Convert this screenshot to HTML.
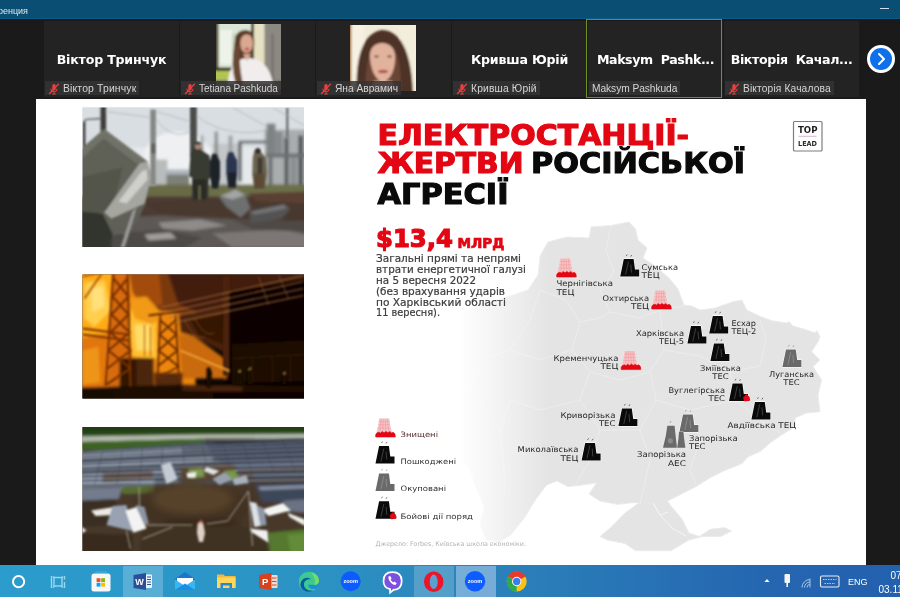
<!DOCTYPE html>
<html lang="uk"><head><meta charset="utf-8"><title>Zoom Конференция</title>
<style>
html,body{margin:0;padding:0}
body{width:900px;height:600px;overflow:hidden;background:#1a1a1a;position:relative;font-family:"Liberation Sans",sans-serif}
.abs{position:absolute}
#titlebar{left:0;top:0;width:900px;height:19px;background:#0a4e73;border-bottom:1.5px solid #0b5a86;box-sizing:border-box;box-shadow:-6px 0 0 #0a4e73,6px 0 0 #0a4e73,0 -6px 0 #0a4e73,-6px -6px 0 #0a4e73,6px -6px 0 #0a4e73}
#titlebar span{position:absolute;right:872px;top:5.5px;font-size:9px;color:#dfe9ef;white-space:nowrap}
#min{left:880px;top:8px;width:9px;height:1px;background:#cfe0ea}
.tile{position:absolute;top:21px;width:135px;height:76px;background:#232323;overflow:hidden}
.tile .nm{position:absolute;left:0;width:135px;top:29.7px;text-align:center;color:#fff;font-weight:bold;font-family:"DejaVu Sans","Liberation Sans",sans-serif;font-size:12.6px;letter-spacing:-0.2px;white-space:nowrap;line-height:18px}
.tile .lb{position:absolute;left:1px;top:59.5px;height:14.5px;background:rgba(52,52,52,.85);color:#d6d6d6;font-size:10.4px;letter-spacing:.15px;line-height:15px;white-space:nowrap;padding:0 3px 0 18px}
.tile .lb.nomic{padding-left:3px}
.tile .lb svg{position:absolute;left:3px;top:2px}
#active{left:586px;top:19px;width:134px;height:77px;border:1.5px solid #6f8f22;box-sizing:content-box}
#next{left:867px;top:45px;width:22px;height:22px;border-radius:50%;background:#0e71eb;border:3px solid #fff}
#slide{left:35.5px;top:98.5px;width:830.5px;height:466.5px;background:#fff;overflow:hidden}
#taskbar{left:0;top:565px;width:900px;height:32px;background:linear-gradient(90deg,#2b9ccc 0%,#2b93c4 35%,#2a7db8 60%,#2566b1 85%,#2360ae 100%);box-shadow:-6px 0 0 #2b9ccc,6px 0 0 #2360ae}
#under{left:0;top:597px;width:900px;height:3px;background:#fff;box-shadow:-6px 0 0 #fff,6px 0 0 #fff,0 6px 0 #fff,-6px 6px 0 #fff,6px 6px 0 #fff}
#root{position:absolute;left:-6px;top:-6px;width:912px;height:612px;overflow:hidden;background:#1a1a1a;filter:blur(0.5px)}
#stage{position:absolute;left:6px;top:6px;width:900px;height:600px}
html{background:#1a1a1a}
</style></head><body><div id="root"><div id="stage">
<div id="titlebar" class="abs"><span>Конференция</span></div><div id="min" class="abs"></div>

<div class="tile" style="left:44px"><div class="nm">Віктор Тринчук</div><div class="lb" style="font-size:10.4px"><svg width="12" height="12" viewBox="0 0 12 12"><path d="M6,1 a1.7,1.7 0 0 1 1.7,1.7 v3 a1.7,1.7 0 0 1 -3.4,0 v-3 A1.7,1.7 0 0 1 6,1 Z" fill="#e8403f"/><path d="M2.8,5.6 a3.2,3.2 0 0 0 6.4,0 M6,8.8 v2 M4.2,11 h3.6" stroke="#e8403f" stroke-width="1" fill="none"/><path d="M1.2,11 L10.8,0.8" stroke="#e8403f" stroke-width="1.3"/></svg>Віктор Тринчук</div></div>
<div class="tile" style="left:180px"><svg class="abs" style="left:35.6px;top:3px" width="65" height="66" viewBox="0 0 65 66"><defs><filter id="b1" x="-10%" y="-10%" width="120%" height="120%"><feGaussianBlur stdDeviation="0.9"/></filter><clipPath id="k1"><rect width="65" height="66"/></clipPath></defs>
<g clip-path="url(#k1)"><rect width="65" height="66" fill="#c9ccbc"/><g filter="url(#b1)">
<rect x="-2" y="-2" width="40" height="52" fill="#dce6d6"/>
<rect x="4" y="6" width="12" height="34" fill="#eef3ea"/>
<rect x="16" y="10" width="10" height="30" fill="#c4d4bc"/>
<rect x="-2" y="-2" width="4.4" height="70" fill="#4f4636"/>
<rect x="35" y="-2" width="3.2" height="38" fill="#3d392b"/>
<rect x="38" y="-2" width="10.5" height="52" fill="#e5e1c2"/>
<rect x="48.5" y="-2" width="20" height="70" fill="#8c8882"/>
<rect x="55" y="10" width="3" height="50" fill="#7a7670"/>
<rect x="-2" y="43.5" width="18" height="3.4" fill="#3b3729"/>
<rect x="-2" y="47" width="16" height="12" fill="#b4c452"/>
<rect x="-2" y="56" width="70" height="12" fill="#77736b"/>
<path d="M19,16 C19,4 37,2 38,14 C39,22 37,30 35,36 L30,46 L30,58 L17,58 C16,44 17,30 19,16 Z" fill="#5b3b29"/>
<ellipse cx="30.6" cy="19.5" rx="6.4" ry="9.4" fill="#d9a88f"/>
<path d="M24,14 C26,6 36,6 37,14 C34,9 28,9 24,14 Z" fill="#5b3b29"/>
<path d="M12,60 C12,44 20,35 30,34 C44,33 54,42 57,60 Z" fill="#f1eded"/>
<path d="M19,22 C16,34 16,48 20,60 L27,60 C24,46 23,34 24.5,22 Z" fill="#6a4632"/>
<ellipse cx="31" cy="25" rx="2.4" ry="1.2" fill="#c2364f"/>
<path d="M27,30 L31,37 L35,30 Z" fill="#d9a88f"/>
</g></g></svg><div class="lb" style="font-size:10px;letter-spacing:-0.05px"><svg width="12" height="12" viewBox="0 0 12 12"><path d="M6,1 a1.7,1.7 0 0 1 1.7,1.7 v3 a1.7,1.7 0 0 1 -3.4,0 v-3 A1.7,1.7 0 0 1 6,1 Z" fill="#e8403f"/><path d="M2.8,5.6 a3.2,3.2 0 0 0 6.4,0 M6,8.8 v2 M4.2,11 h3.6" stroke="#e8403f" stroke-width="1" fill="none"/><path d="M1.2,11 L10.8,0.8" stroke="#e8403f" stroke-width="1.3"/></svg>Tetiana Pashkuda</div></div>
<div class="tile" style="left:316px"><svg class="abs" style="left:34px;top:4px" width="66" height="66" viewBox="0 0 66 66"><defs><filter id="b2" x="-10%" y="-10%" width="120%" height="120%"><feGaussianBlur stdDeviation="0.9"/></filter><clipPath id="k2"><rect width="66" height="66"/></clipPath></defs>
<g clip-path="url(#k2)"><rect width="66" height="66" fill="#f1ebd9"/><g filter="url(#b2)">
<rect x="-2" y="-2" width="3.4" height="70" fill="#a9733f"/>
<rect x="2" y="-2" width="12" height="70" fill="#f6f1e2"/>
<rect x="50" y="-2" width="18" height="70" fill="#f3eddb"/>
<path d="M7,70 C5,40 10,8 32,5 C54,6 62,34 63,70 Z" fill="#4e3226"/>
<path d="M16,70 C14,50 18,30 22,22 L44,22 C50,34 52,52 50,70 Z" fill="#6b4434"/>
<path d="M20,30 C20,14 44,14 45,30 C46,44 40,56 33,57 C26,56 20,44 20,30 Z" fill="#e2b39c"/>
<path d="M19,30 C20,12 31,9 33,9 C37,9 46,12 46,30 C43,20 38,15 32,14 C26,15 22,20 19,30 Z" fill="#4e3226"/>
<ellipse cx="33" cy="46.5" rx="5" ry="1.7" fill="#b44a4a"/>
<ellipse cx="26.5" cy="31.5" rx="2.4" ry="1" fill="#5b4037"/><ellipse cx="39.5" cy="31.5" rx="2.4" ry="1" fill="#5b4037"/>
<path d="M24,56 L42,56 L46,70 L20,70 Z" fill="#dba992"/>
</g></g></svg><div class="lb" style="font-size:10.2px;letter-spacing:0"><svg width="12" height="12" viewBox="0 0 12 12"><path d="M6,1 a1.7,1.7 0 0 1 1.7,1.7 v3 a1.7,1.7 0 0 1 -3.4,0 v-3 A1.7,1.7 0 0 1 6,1 Z" fill="#e8403f"/><path d="M2.8,5.6 a3.2,3.2 0 0 0 6.4,0 M6,8.8 v2 M4.2,11 h3.6" stroke="#e8403f" stroke-width="1" fill="none"/><path d="M1.2,11 L10.8,0.8" stroke="#e8403f" stroke-width="1.3"/></svg>Яна Аврамич</div></div>
<div class="tile" style="left:452px"><div class="nm">Кривша Юрій</div><div class="lb" style="font-size:10.3px"><svg width="12" height="12" viewBox="0 0 12 12"><path d="M6,1 a1.7,1.7 0 0 1 1.7,1.7 v3 a1.7,1.7 0 0 1 -3.4,0 v-3 A1.7,1.7 0 0 1 6,1 Z" fill="#e8403f"/><path d="M2.8,5.6 a3.2,3.2 0 0 0 6.4,0 M6,8.8 v2 M4.2,11 h3.6" stroke="#e8403f" stroke-width="1" fill="none"/><path d="M1.2,11 L10.8,0.8" stroke="#e8403f" stroke-width="1.3"/></svg>Кривша Юрій</div></div>
<div class="tile" style="left:588px"><div class="nm"><span style="letter-spacing:-0.4px">Maksym&nbsp; Pashk...</span></div><div class="lb nomic" style="font-size:10.2px;letter-spacing:-0.05px">Maksym Pashkuda</div></div>
<div class="tile" style="left:724px"><div class="nm"><span style="letter-spacing:-0.36px">Вікторія&nbsp; Качал...</span></div><div class="lb" style="font-size:10.2px"><svg width="12" height="12" viewBox="0 0 12 12"><path d="M6,1 a1.7,1.7 0 0 1 1.7,1.7 v3 a1.7,1.7 0 0 1 -3.4,0 v-3 A1.7,1.7 0 0 1 6,1 Z" fill="#e8403f"/><path d="M2.8,5.6 a3.2,3.2 0 0 0 6.4,0 M6,8.8 v2 M4.2,11 h3.6" stroke="#e8403f" stroke-width="1" fill="none"/><path d="M1.2,11 L10.8,0.8" stroke="#e8403f" stroke-width="1.3"/></svg>Вікторія Качалова</div></div>
<div id="active" class="abs"></div>
<div id="next" class="abs"><svg width="22" height="22" viewBox="0 0 22 22"><path d="M9,6 L14,11 L9,16" stroke="#fff" stroke-width="2" fill="none" stroke-linecap="round" stroke-linejoin="round"/></svg></div>
<div id="slide" class="abs"><svg class="abs" style="left:-0.5px;top:1.5px" width="831" height="465" viewBox="35 100 831 465">
<defs>
<linearGradient id="fade" x1="458" x2="548" y1="0" y2="0" gradientUnits="userSpaceOnUse"><stop offset="0" stop-color="#fff" stop-opacity="0"/><stop offset="1" stop-color="#fff" stop-opacity="1"/></linearGradient>
<mask id="mfade" maskUnits="userSpaceOnUse" x="400" y="200" width="470" height="370"><rect x="400" y="200" width="470" height="370" fill="url(#fade)"/></mask>
<filter id="pb" x="-5%" y="-5%" width="110%" height="110%"><feGaussianBlur stdDeviation="1.6"/></filter>
<filter id="pb3" x="-20%" y="-20%" width="140%" height="140%"><feGaussianBlur stdDeviation="3.5"/></filter>
<filter id="pb2" x="-5%" y="-5%" width="110%" height="110%"><feGaussianBlur stdDeviation="0.8"/></filter>
<clipPath id="c1"><rect x="82.5" y="107.5" width="221.5" height="139.5"/></clipPath>
<clipPath id="c2"><rect x="82.5" y="274.5" width="221.5" height="124"/></clipPath>
<clipPath id="cpan"><path d="M-5,25 L34,22 L130,15 L226,12 L226,56 L160,58 L150,40 L100,42 L96,56 L-5,60 Z"/></clipPath>
<clipPath id="c3"><rect x="82.5" y="427" width="221.5" height="124"/></clipPath>
</defs>
<g mask="url(#mfade)"><polygon points="540,256 548,242 567,237 589,238 591,227 611,225.5 629,222 635.5,229 638,240 647,248 643,258 655,266 669,278 678,289 684,305 692,306 700,310 715,308 733,301.7 742,300 746.7,310 761,316.7 772,320.7 786.7,323 789,321.5 793,326 802.7,328.7 814.7,332.7 817,330.7 820,336.7 818,341.7 811.7,351.7 820,360 813,366.7 821.7,380 818,395 820,411.7 806.7,413 795,418 795,426.7 780,436 770,443 761,451 748,457 742,463.6 724.4,470.7 710,477.8 696,486.7 681.8,493.8 667.6,501 671,506 681.8,518.7 689,533 699.6,536.4 710,529.3 724.4,527.6 731.6,531 721,536.4 703,536.4 689,540 671,550.7 635.6,550.7 625,543.6 607,540 600,536.4 610.7,527.6 625,513 639,502.7 632,502.7 617.8,504.4 600,501 589,494 596.5,483 582,485 568,486.7 557,481 546.7,485 536,499 525,517 511,534.7 500,542 486,540 480,524 484,506 476,488 470,470 456,452 440,436 436,420 430,400 428,370 436,340 452,318 476,306 504,298 528,290 538,275" fill="#e4e4e4" stroke="#ececec" stroke-width="1" stroke-linejoin="round"/><path d="M653,503 L660,515 L672,528 L686,536 M660,515 L668,512" stroke="#f6f6f6" stroke-width="1" fill="none"/>
<g stroke="#eeeeee" stroke-width="0.8" fill="none" stroke-linejoin="round"><path d="M611,226 L606,250 L614,272 L600,290 L610,312 L640,318 L660,310 L684,306"/><path d="M540,290 L566,300 L580,322 L600,318 L610,312"/><path d="M580,322 L572,350 L590,372 L620,380 L650,372 L664,350 L660,310"/><path d="M664,350 L700,356 L730,372 L760,366 L766,340 L760,320"/><path d="M730,372 L736,400 L760,420 L780,433"/><path d="M650,372 L656,400 L690,410 L736,400"/><path d="M690,410 L700,440 L690,470 L696,484"/><path d="M656,400 L640,430 L650,460 L640,504"/><path d="M590,372 L580,400 L600,430 L640,430"/><path d="M600,430 L590,460 L576,484"/><path d="M580,400 L540,410 L510,400 L500,430 L504,470 L504,492"/><path d="M572,350 L540,360 L510,350 L480,360 L470,390 L500,430"/><path d="M540,290 L530,320 L510,350"/></g></g>
<!-- photo 1 : damaged substation -->
<g clip-path="url(#c1)"><g transform="translate(82.5,107.5)">
<rect x="-2" y="-2" width="226" height="144" fill="#dde1e5"/>
<g filter="url(#pb)">
<rect x="-5" y="-5" width="232" height="50" fill="#d9dee3"/>
<rect x="-5" y="40" width="232" height="42" fill="#e6e9eb"/>
<ellipse cx="95" cy="50" rx="34" ry="26" fill="#eef0f2"/>
<!-- distant trees / building -->
<rect x="72" y="52" width="13" height="26" fill="#b9bcbc"/>
<rect x="84" y="62" width="23" height="6" fill="#aeb6bd"/>
<rect x="84" y="67" width="23" height="11" fill="#7d8078"/>
<!-- right equipment -->
<rect x="182" y="22" width="44" height="56" fill="#a9adae"/>
<rect x="184" y="16" width="9" height="30" fill="#7d8282"/>
<rect x="193" y="24" width="7" height="22" fill="#858a8a"/>
<rect x="202" y="30" width="4" height="48" fill="#55585a"/>
<rect x="216" y="28" width="4.5" height="50" fill="#505355"/>
<rect x="183" y="46" width="40" height="4" fill="#6d7172"/>
<rect x="186" y="50" width="4" height="28" fill="#6a6e6f"/>
<rect x="208" y="50" width="6" height="28" fill="#8a8e8e"/>
<!-- middle equipment -->
<rect x="130" y="36" width="26" height="42" fill="#c3c7c9"/>
<rect x="132" y="24" width="3.5" height="54" fill="#8c9091"/>
<rect x="118" y="28" width="3" height="40" fill="#a2a6a8"/>
<rect x="146" y="28" width="4" height="46" fill="#9da1a2"/>
<rect x="155.500" y="34" width="4" height="40" fill="#6d7071"/>
<rect x="156" y="33" width="28" height="3" fill="#707374"/>
<!-- grass -->
<rect x="60" y="77" width="170" height="14" fill="#6c7049"/>
<path d="M60,79 L110,77 L110,92 L62,96 Z" fill="#6a6a46"/>
<!-- dirt -->
<rect x="-5" y="89" width="232" height="60" fill="#4c3b31"/>
<path d="M62,96 L140,90 L226,88 L226,112 L160,112 L80,108 Z" fill="#49372d"/>
<path d="M165,86 L226,84 L226,96 L175,94 Z" fill="#5a4032"/>
<path d="M-5,112 L80,108 L160,112 L226,114 L226,145 L-5,145 Z" fill="#5d5855"/>
<path d="M76,115 L118,112 L144,118 L110,123 L80,121 Z" fill="#8f8b89"/>
<path d="M130,126 L200,122 L226,128 L226,140 L150,140 Z" fill="#7b7774"/>
<path d="M150,112 L226,114 L226,124 L170,122 Z" fill="#4f4845"/>
<path d="M30,126 L80,122 L120,130 L100,142 L30,142 Z" fill="#4e4a47"/>
<path d="M62,127 L88,125 L94,131 L66,133 Z" fill="#a09c9a"/>
<path d="M-5,112 L28,112 L30,142 L-5,142 Z" fill="#3b3b37"/>
<!-- rocks -->
<path d="M136.500,89 L153.400,82 L163,88 L168,101 L158,110 L143.700,99 Z" fill="#6e6f70"/>
<path d="M138,88.500 L153.400,82 L162.500,87.500 L150,92 Z" fill="#a3a4a5"/>
<path d="M166.700,103.800 L201.700,96.500 L207.700,101.400 L199.300,111 L168,116 Z" fill="#525353"/>
<path d="M168,104.500 L201,97.500 L205,100.500 L172,107 Z" fill="#77787a"/>
</g>
<g filter="url(#pb2)">
<!-- poles -->
<rect x="18" y="-2" width="5.600" height="27" fill="#3d3d3a"/>
<rect x="0.300" y="14" width="2.600" height="30" fill="#3a3a37"/>
<path d="M1.500,15 L3,12 L18,11" stroke="#5d605e" stroke-width="1.300" fill="none"/>
<rect x="67.800" y="2" width="5.600" height="76" fill="#858884"/>
<rect x="68.500" y="36" width="4.500" height="10" fill="#5f625f"/>
<rect x="107.500" y="-2" width="6.800" height="52" fill="#4c4d4b"/>
<rect x="203.500" y="0" width="2.500" height="30" fill="#70736f"/>
<path d="M74,12 C84,26 96,30 108,24 M114,8 C130,22 160,30 186,22 M74,4 L108,14 M150,0 L186,20 M190,0 L222,18 M23,4 L68,10" stroke="#a9adb0" stroke-width="0.700" fill="none"/>
<!-- slab -->
<path d="M-2,42 L21.600,21.600 L65,54 L68.700,70 L62.500,98 L43,126 L-2,131 Z" fill="#5e6056"/>
<path d="M-2,42 L21.600,21.600 L65,54 L55,56.500 L21,31 L-2,52 Z" fill="#707268"/>
<path d="M-2,70 L40,60 L30,100 L-2,112 Z" fill="#53554b"/>
<path d="M57,56 L65,54 L68.700,70 L62,96 L29,111 L22,105 Z" fill="#a6a6a0"/>
<path d="M59,64 L64,62 L65,72 L44,96 L36,94 Z" fill="#cfcfcb"/>
<path d="M29,111 L62,98 L56,112 L44,127 L30,126 Z" fill="#5f5f59"/>
<path d="M-2,104 L20,106 L30,126 L26,142 L-2,142 Z" fill="#33342f"/>
<path d="M50,104 L54,100 L46,128 L42,140 L38,140 Z" fill="#9a9a96"/>
<!-- people -->
<path d="M111,40 a4,4 0 1 1 8,0 v3 l8,5 l2.500,22 l-3,1 l-1,21 h-5.500 l-1,-16 l-2,0 l-1,16 h-5.500 l-1,-22 l-3,-1 l1.500,-22 z" fill="#383a30"/>
<rect x="110" y="72" width="14" height="20" fill="#2b2b28"/>
<rect x="116" y="78" width="2" height="14" fill="#6c7049"/>
<ellipse cx="115.500" cy="38.500" rx="3" ry="3.600" fill="#a88a78"/>
<path d="M111.800,37 a3.800,3.400 0 0 1 7.400,0 z" fill="#2f3029"/>
<path d="M129,49 a3,3 0 1 1 6,0 l2.500,5 v16 l-2,11 h-6 l-2,-12 v-15 z" fill="#1f2128"/>
<path d="M145,48 a3.400,3.400 0 1 1 6.800,0 l3,5 v14 l-2,13 h-7 l-2,-14 v-13 z" fill="#2c3650"/>
<rect x="146" y="65" width="7.500" height="15" fill="#1f2127"/>
<path d="M171.500,45 a3.600,3.600 0 1 1 7.200,0 l5,5 l1,16 l-2,15 h-11 l-2,-14 l0.500,-17 z" fill="#6b6350"/>
<rect x="175" y="50" width="5" height="18" fill="#3d3a33"/>
<ellipse cx="175.400" cy="43.500" rx="2.800" ry="3" fill="#332f2b"/>
<rect x="171.500" y="66" width="10.500" height="15" fill="#5c4a36"/>
</g>
</g></g>

<!-- photo 2 : fire -->
<g clip-path="url(#c2)"><g transform="translate(82.5,274.5)">
<rect x="-2" y="-2" width="226" height="128" fill="#0e0704"/>
<g filter="url(#pb)">
<rect x="-5" y="-5" width="118" height="135" fill="#ec860a"/>
<!-- smoke / dark top -->
<path d="M44,-5 L160,-5 L150,26 L104,40 L76,36 L60,16 Z" fill="#7a3808"/>
<path d="M46,-5 L76,-5 L80,30 L62,34 L50,18 Z" fill="#a24c0a"/>
<path d="M84,-5 L226,-5 L226,22 L120,40 L96,30 Z" fill="#431f07"/>
<path d="M142,18 L226,4 L226,118 L142,118 Z" fill="#0d0603"/>
<!-- bright fire left -->
<path d="M-5,-5 L28,-5 L34,24 L24,58 L-5,64 Z" fill="#ffab18"/>
<path d="M2,8 L22,6 L28,36 L12,52 L2,44 Z" fill="#ffcf4c"/>
<path d="M8,14 L20,12 L22,32 L10,38 Z" fill="#ffe07a"/>
<path d="M-5,64 L24,62 L22,116 L-5,118 Z" fill="#e27408"/>
<path d="M0,76 L16,72 L18,108 L0,110 Z" fill="#ee9414"/>
<!-- inside pylon darker -->
<path d="M30,-5 L46,-5 L48,112 L24,112 Z" fill="#d86c0a"/>
<!-- bright between pylons -->
<path d="M48,34 L74,40 L76,84 L50,82 L46,60 Z" fill="#ffc030"/>
<path d="M52,50 L68,50 L70,76 L54,76 Z" fill="#ffdc6a"/>
<path d="M46,24 L64,22 L80,40 L70,50 L52,44 Z" fill="#f29a18"/>
<path d="M74,52 L98,56 L100,100 L76,96 Z" fill="#ee860a"/>
<path d="M96,60 L112,62 L142,84 L144,104 L100,104 Z" fill="#c86a0e"/>
<path d="M96,40 L140,34 L142,78 L112,62 L98,58 Z" fill="#4c2408"/>
<path d="M108,46 L140,40 L140,70 L116,60 Z" fill="#351805"/>
<path d="M150,70 L226,66 L226,106 L150,108 Z" fill="#1c0e06"/>
<!-- cabinet -->
<rect x="37" y="83.500" width="34" height="33" fill="#331806"/>
<rect x="54" y="85" width="17" height="30" fill="#4b260a"/>
<rect x="72" y="98" width="28" height="16" fill="#55290a"/>
<!-- ground -->
<path d="M-5,113 L100,110 L226,112 L226,130 L-5,130 Z" fill="#1d0e05"/>
<path d="M-5,116 L30,114 L30,130 L-5,130 Z" fill="#150a04"/>
<path d="M100,110 L160,112 L160,117 L100,116 Z" fill="#4a230a"/>
<path d="M130,117 L226,117 L226,130 L130,130 Z" fill="#0d0603"/>
</g>
<g filter="url(#pb2)" fill="none">
<!-- pylons -->
<path d="M31,-2 L23,112 M45,-2 L48,112 M31,4 L46,22 L29,40 L47,58 L26,76 L48,94 L24,110 M45,4 L30,22 L46,40 L28,58 L48,76 L25,94" stroke="#7a3006" stroke-width="2.200"/>
<path d="M0,54 L46,60 M0,60 L46,66" stroke="#7a3006" stroke-width="2.200"/>
<path d="M0,2 L20,-2 L2,24" stroke="#a04a0a" stroke-width="1.600"/>
<path d="M78,40 L75,106 M93,40 L96.500,106 M78,46 L94,60 L76,76 L96,92 L75,104 M93,46 L77,60 L95,76 L75,92" stroke="#6a2a06" stroke-width="1.800"/>
<path d="M66,41 L104,36" stroke="#6a2a06" stroke-width="2"/>
<path d="M62,50 L62,82 M68,52 L68,82" stroke="#b86414" stroke-width="1"/>
<rect x="140.500" y="2" width="6.500" height="99" fill="#4e240a" stroke="none"/>
<!-- lines -->
<path d="M78,33 L221,1 M82,38 L221,7 M86,43 L221,14 M92,48 L221,21" stroke="#a8733f" stroke-width="1.100" opacity=".85"/>
<path d="M196,0 L206,24 M176,2 L186,30" stroke="#7a5230" stroke-width="1" opacity=".8"/>
<path d="M98,76 L147,96.500" stroke="#f5a83c" stroke-width="1.800"/>
<path d="M102,46 C110,60 116,66 122,62 M112,44 C120,58 126,62 132,58" stroke="#8a5026" stroke-width="0.800"/>
<path d="M150,84 L222,80 M170,84 L170,108 M190,82 L190,108 M208,82 L208,108" stroke="#2e1a0c" stroke-width="1.400"/>
<!-- firefighters -->
<path d="M124,94 l3,-2 l2.500,6 l-1,15 h-4.500 z M155,96 l3,-1 l1.500,15 h-5 z M165,94 l3,-1 l1.500,17 h-4.500 z M200,98 l3,0 l1,12 h-4 z" fill="#160b05" stroke="none"/>
<path d="M156,97 l2.500,-1 M166,95 l2.500,-1.500 M201,99 l2,-1" stroke="#c9a24a" stroke-width="1.400"/>
</g>
</g></g>

<!-- photo 3 : solar plant -->
<g clip-path="url(#c3)"><g transform="translate(82.5,427)">
<rect x="-2" y="-2" width="226" height="128" fill="#46382a"/>
<g filter="url(#pb)">
<rect x="-5" y="-5" width="232" height="16" fill="#2b4a19"/>
<path d="M-5,-5 L226,-5 L226,3 L-5,5 Z" fill="#223c15"/>
<path d="M-5,9.600 L120,7.600 L226,7 L226,11.400 L120,11.800 L-5,15 Z" fill="#b4bcae"/>
<path d="M-5,15 L120,11.800 L130,17 L34,23 L-5,23 Z" fill="#3e6422"/>
<!-- panel field -->
<path d="M-5,25 L34,22 L130,15 L226,12 L226,58 L140,58 L-5,60 Z" fill="#525b6a"/>
<path d="M122,14 L226,11 L226,40 L150,42 L130,30 Z" fill="#414a5d"/>
<path d="M130,14 L226,11.500 L226,17 L136,19 Z" fill="#363d4d"/>
<path d="M-5,27 L100,21 L100,26 L-5,33 Z" fill="#818b9c"/>
<path d="M-5,37 L130,30 L130,34 L-5,42 Z" fill="#8993a3"/>
<path d="M-5,47 L90,42 L90,46 L-5,52 Z" fill="#7f8898"/>
<path d="M-5,32 L226,22 L226,25 L-5,36 Z" fill="#3e4554"/>
<path d="M-5,42 L226,32 L226,35.500 L-5,46 Z" fill="#434a58"/>
<path d="M-5,52 L72,48 L72,57 L-5,60 Z" fill="#8a94a4"/>
<path d="M20,46 L70,44 L72,52 L20,55 Z" fill="#5a4434"/>
<path d="M96,40 L150,37 L160,50 L100,56 Z" fill="#584636"/>
<path d="M150,42 L226,38 L226,56 L160,58 Z" fill="#4f4238"/>
<path d="M150,36 L226,33 L226,40 L156,43 Z" fill="#566074"/>
<path d="M170,46 L226,44 L226,50 L172,52 Z" fill="#4a5468"/>
<path d="M106,42 L120,41 L122,50 L108,51 Z" fill="#7f9c52"/>
<path d="M142,44 L154,43 L156,52 L144,53 Z" fill="#7a984e"/>
<!-- mid ground -->
<path d="M-5,60 L226,56 L226,130 L-5,130 Z" fill="#46372a"/>
<path d="M38,59 L72,58 L72,66 L40,67 Z" fill="#5a6c30"/>
<!-- right panels -->
<path d="M172,57 L226,55 L226,76 L180,75 Z" fill="#3d465a"/>
<path d="M176,60 L226,58 L226,61 L178,63 Z" fill="#8e98a8"/>
<path d="M200,74 L226,72 L226,86 L206,84 Z" fill="#6a7384"/>
<!-- left panels -->
<path d="M-5,61 L40,60 L36,72 L-5,74 Z" fill="#727c8d"/>
<path d="M-5,74 L34,72 L32,98 L-5,100 Z" fill="#3b2d20"/>
<!-- crater -->
<g filter="url(#pb3)"><ellipse cx="112" cy="80" rx="56" ry="26" fill="#423222"/>
<ellipse cx="110" cy="72" rx="40" ry="15" fill="#56422c"/>
<ellipse cx="118" cy="98" rx="40" ry="8" fill="#3a2b1d"/></g>
<path d="M60,100 L180,100 L186,130 L56,130 Z" fill="#413021"/>
<!-- green bottom-right -->
<path d="M185,106 L226,102 L226,130 L188,130 Z" fill="#54792f"/>
<path d="M205,108 L226,106 L226,126 L208,126 Z" fill="#628c38"/>
<path d="M-5,106 L50,108 L50,130 L-5,130 Z" fill="#372a1d"/>
</g>
<g filter="url(#pb2)">
<!-- row lines -->
<g clip-path="url(#cpan)">
<path d="M-5,24.0 Q110,18.5 226,13.0" stroke="#2f3542" stroke-width="0.90" fill="none" opacity=".75"/>
<path d="M-5,25.6 Q110,20.1 226,14.6" stroke="#a9b2c2" stroke-width="0.70" fill="none" opacity=".55"/>
<path d="M-5,26.7 Q110,21.0 226,16.4" stroke="#2f3542" stroke-width="0.98" fill="none" opacity=".75"/>
<path d="M-5,28.5 Q110,22.8 226,18.1" stroke="#a9b2c2" stroke-width="0.76" fill="none" opacity=".55"/>
<path d="M-5,30.0 Q110,24.3 226,20.4" stroke="#2f3542" stroke-width="1.06" fill="none" opacity=".75"/>
<path d="M-5,32.0 Q110,26.2 226,22.4" stroke="#a9b2c2" stroke-width="0.81" fill="none" opacity=".55"/>
<path d="M-5,33.6 Q110,27.9 226,24.9" stroke="#2f3542" stroke-width="1.13" fill="none" opacity=".75"/>
<path d="M-5,35.7 Q110,30.1 226,27.0" stroke="#a9b2c2" stroke-width="0.87" fill="none" opacity=".55"/>
<path d="M-5,37.4 Q110,32.0 226,29.5" stroke="#2f3542" stroke-width="1.21" fill="none" opacity=".75"/>
<path d="M-5,39.7 Q110,34.3 226,31.8" stroke="#a9b2c2" stroke-width="0.92" fill="none" opacity=".55"/>
<path d="M-5,41.3 Q110,36.4 226,34.4" stroke="#2f3542" stroke-width="1.29" fill="none" opacity=".75"/>
<path d="M-5,43.8 Q110,38.8 226,36.9" stroke="#a9b2c2" stroke-width="0.98" fill="none" opacity=".55"/>
<path d="M-5,45.3 Q110,41.0 226,39.3" stroke="#2f3542" stroke-width="1.37" fill="none" opacity=".75"/>
<path d="M-5,48.0 Q110,43.7 226,42.0" stroke="#a9b2c2" stroke-width="1.03" fill="none" opacity=".55"/>
<path d="M-5,49.5 Q110,46.0 226,44.5" stroke="#2f3542" stroke-width="1.44" fill="none" opacity=".75"/>
<path d="M-5,52.3 Q110,48.8 226,47.3" stroke="#a9b2c2" stroke-width="1.09" fill="none" opacity=".55"/>
<path d="M-5,53.7 Q110,51.2 226,49.7" stroke="#2f3542" stroke-width="1.52" fill="none" opacity=".75"/>
<path d="M-5,56.7 Q110,54.2 226,52.7" stroke="#a9b2c2" stroke-width="1.14" fill="none" opacity=".55"/>
<path d="M-5,58.0 Q110,56.5 226,55.0" stroke="#2f3542" stroke-width="1.60" fill="none" opacity=".75"/>
<path d="M-5,61.2 Q110,59.7 226,58.2" stroke="#a9b2c2" stroke-width="1.20" fill="none" opacity=".55"/>
<path d="M20,24 L12,58 M40,22 L34,58 M60,21 L57,56 M80,19 L79,44 M100,18 L102,40 M120,16 L124,40 M140,15 L147,40 M160,14 L169,44 M180,13.5 L191,44 M200,13 L213,44" stroke="#39404e" stroke-width="0.8" opacity=".5" fill="none"/>
</g>
<!-- white debris -->
<path d="M8.600,83.600 L29.600,80.300 L30.700,88 L13,89 Z" fill="#ecebe6"/>
<path d="M30,79 L44,78 L50,104 L24,98 Z" fill="#98a2b2"/>
<path d="M43,83.600 L54,80 L64,101.400 L50.700,105.800 Z" fill="#f3f3f3"/>
<path d="M53,78 L62,80 L66,96 L63,98 Z" fill="#8d96a6"/>
<path d="M78.400,38 L88,35 L95,52 L84,57 Z" fill="#c4cbd4"/>
<path d="M104,46 L114,45 L113,50.400 L105,51 Z" fill="#f0f0f0"/>
<path d="M124,40 L137,44 L131,48 L121,44 Z" fill="#dfe2e6"/>
<path d="M130,52 L142,45 L150,52 L137,58 Z" fill="#98a0ae"/>
<path d="M150,52 L164,48 L166,56 L152,58 Z" fill="#a8b0bc"/>
<path d="M179.500,82.500 L200.600,75.900 L208.300,83.600 L186,89 Z" fill="#f4f4f4"/>
<path d="M167.300,74.800 L174,75.900 L178.400,99 L171.800,100 Z" fill="#dde2e8"/>
<path d="M174,78 L182,82 L184,98 L178,99 Z" fill="#8f98a8"/>
<path d="M167.300,101.400 L185,103.600 L186,115.800 L168.400,104.700 Z" fill="#f0f0f0"/>
<path d="M205,85.800 L222.500,92.500 L222.500,99 L207,90 Z" fill="#ededed"/>
<path d="M-2,99 L4,103.600 L-2,107 Z" fill="#ededed"/>
<!-- poles -->
<path d="M145,94 L166,64 M124,97 L145,94 M56.500,60 L57,82 M166,64 L170,119 M44,104 L48,122 M60,112 L90,100 M64,98 L110,98" stroke="#a4a49a" stroke-width="1" fill="none"/>
<!-- person -->
<path d="M115,98 a3,3 0 1 1 6,0 l1.500,8 l-2,9 h-4 l-2,-9 z" fill="#e0cfc6"/>
<circle cx="118.500" cy="95" r="1.700" fill="#d86a5e"/>
</g>
</g></g>

<text x="377.5" y="145" font-size="27.5" font-family='"DejaVu Sans", "Liberation Sans", sans-serif' font-weight="bold" fill="#e30613" text-anchor="start" textLength="311.5" lengthAdjust="spacingAndGlyphs" stroke="#e30613" stroke-width="1.1">ЕЛЕКТРОСТАНЦІЇ-</text>
<text x="377.5" y="172.6" font-size="27.5" font-family='"DejaVu Sans", "Liberation Sans", sans-serif' font-weight="bold" fill="#e30613" text-anchor="start" textLength="146" lengthAdjust="spacingAndGlyphs" stroke="#e30613" stroke-width="1.1">ЖЕРТВИ</text>
<text x="531" y="172.6" font-size="27.5" font-family='"DejaVu Sans", "Liberation Sans", sans-serif' font-weight="bold" fill="#0a0a0a" text-anchor="start" textLength="214" lengthAdjust="spacingAndGlyphs" stroke="#0a0a0a" stroke-width="1.1">РОСІЙСЬКОЇ</text>
<text x="377.5" y="203.6" font-size="27.5" font-family='"DejaVu Sans", "Liberation Sans", sans-serif' font-weight="bold" fill="#0a0a0a" text-anchor="start" textLength="131" lengthAdjust="spacingAndGlyphs" stroke="#0a0a0a" stroke-width="1.1">АГРЕСІЇ</text>
<rect x="793.5" y="121.5" width="28.5" height="29.5" fill="#fff" stroke="#7d7d7d" stroke-width="1.2" rx="1"/>
<text x="798" y="133" font-size="9" font-family='"DejaVu Sans", "Liberation Sans", sans-serif' font-weight="bold" fill="#1c1c1c" text-anchor="start" textLength="19.5" lengthAdjust="spacingAndGlyphs">TOP</text>
<path d="M798.5,136.3 H816.5" stroke="#c9a3c0" stroke-width="0.8"/>
<text x="798" y="145.5" font-size="7" font-family='"DejaVu Sans", "Liberation Sans", sans-serif' font-weight="bold" fill="#2a2a2a" text-anchor="start" textLength="19" lengthAdjust="spacingAndGlyphs">LEAD</text>
<text x="376" y="247" font-size="25.5" font-family='"DejaVu Sans", "Liberation Sans", sans-serif' font-weight="bold" fill="#e30613" text-anchor="start" textLength="77" lengthAdjust="spacingAndGlyphs" stroke="#e30613" stroke-width="1.2">$13,4</text>
<text x="457.5" y="248" font-size="13.5" font-family='"DejaVu Sans", "Liberation Sans", sans-serif' font-weight="bold" fill="#e30613" text-anchor="start" textLength="47" lengthAdjust="spacingAndGlyphs" stroke="#e30613" stroke-width="0.7">МЛРД</text>
<text x="376" y="261.5" font-size="9.6" font-family='"DejaVu Sans", "Liberation Sans", sans-serif' font-weight="normal" fill="#3c3c3c" text-anchor="start" textLength="145" lengthAdjust="spacingAndGlyphs" stroke="#3c3c3c" stroke-width="0.2">Загальні прямі та непрямі</text>
<text x="376" y="272.5" font-size="9.6" font-family='"DejaVu Sans", "Liberation Sans", sans-serif' font-weight="normal" fill="#3c3c3c" text-anchor="start" textLength="150" lengthAdjust="spacingAndGlyphs" stroke="#3c3c3c" stroke-width="0.2">втрати енергетичної галузі</text>
<text x="376" y="283.6" font-size="9.6" font-family='"DejaVu Sans", "Liberation Sans", sans-serif' font-weight="normal" fill="#3c3c3c" text-anchor="start" textLength="100" lengthAdjust="spacingAndGlyphs" stroke="#3c3c3c" stroke-width="0.2">на 5 вересня 2022</text>
<text x="376" y="294.6" font-size="9.6" font-family='"DejaVu Sans", "Liberation Sans", sans-serif' font-weight="normal" fill="#3c3c3c" text-anchor="start" textLength="129" lengthAdjust="spacingAndGlyphs" stroke="#3c3c3c" stroke-width="0.2">(без врахування ударів</text>
<text x="376" y="305.6" font-size="9.6" font-family='"DejaVu Sans", "Liberation Sans", sans-serif' font-weight="normal" fill="#3c3c3c" text-anchor="start" textLength="130" lengthAdjust="spacingAndGlyphs" stroke="#3c3c3c" stroke-width="0.2">по Харківський області</text>
<text x="376" y="316.4" font-size="9.6" font-family='"DejaVu Sans", "Liberation Sans", sans-serif' font-weight="normal" fill="#3c3c3c" text-anchor="start" textLength="64" lengthAdjust="spacingAndGlyphs" stroke="#3c3c3c" stroke-width="0.2">11 вересня).</text>
<g transform="translate(375.5,437)"><path d="M3.6,-18.6 L13.9,-18.6 L14.6,-12 L16.6,-4 L0.8,-4 L2.8,-12 Z" fill="#f7c4c6"/><path d="M5.6,-18.4 L4.4,-5 M7.7,-18.4 L7.2,-5 M9.8,-18.4 L10.2,-5 M11.9,-18.4 L13,-5 M3.4,-15.4 H14.2 M3,-12.2 H14.6 M2.4,-9 H15.2" stroke="#ee979b" stroke-width="0.55" fill="none"/><path d="M0.2,0 L0.2,-2.6 L1.6,-4.2 L3.4,-4.8 L5,-3.9 L6.6,-5.4 L8.6,-4.2 L10.4,-5.6 L12.4,-4.2 L14.2,-5.4 L16,-4 L17.8,-4.8 L19.4,-3.2 L19.8,0 Z" fill="#e30613" stroke="#e30613" stroke-width="0.6" stroke-linejoin="round"/></g>
<text x="400.5" y="437" font-size="7.4" font-family='"DejaVu Sans", "Liberation Sans", sans-serif' font-weight="normal" fill="#5a2a2a" text-anchor="start" textLength="37.5" lengthAdjust="spacingAndGlyphs">Знищені</text>
<g transform="translate(375.5,463.6)"><path d="M3.6,-17.5 L13.4,-17.5 L14.8,-7 L19,-7 L19,0 L0,0 Z" fill="#0a0a0a" stroke="#fff" stroke-width="1.2" stroke-linejoin="round" paint-order="stroke"/><path d="M6,-20.5 l1,-1.6 M10.5,-20 l1,-1.6" stroke="#0a0a0a" stroke-width="0.8" fill="none" opacity=".7"/><path d="M8.3,-15 L5.4,-2 M10.6,-12 L11.2,-4" stroke="#fff" stroke-width="0.6" opacity=".35" fill="none"/></g>
<text x="400.5" y="464" font-size="7.4" font-family='"DejaVu Sans", "Liberation Sans", sans-serif' font-weight="normal" fill="#2e2e2e" text-anchor="start" textLength="55.5" lengthAdjust="spacingAndGlyphs">Пошкоджені</text>
<g transform="translate(375.5,491)"><path d="M3.6,-17.5 L13.4,-17.5 L14.8,-7 L19,-7 L19,0 L0,0 Z" fill="#6a6a6a" stroke="#fff" stroke-width="1.2" stroke-linejoin="round" paint-order="stroke"/><path d="M6,-20.5 l1,-1.6 M10.5,-20 l1,-1.6" stroke="#6a6a6a" stroke-width="0.8" fill="none" opacity=".7"/><path d="M8.3,-15 L5.4,-2 M10.6,-12 L11.2,-4" stroke="#fff" stroke-width="0.6" opacity=".35" fill="none"/></g>
<text x="400.5" y="491" font-size="7.4" font-family='"DejaVu Sans", "Liberation Sans", sans-serif' font-weight="normal" fill="#2e2e2e" text-anchor="start" textLength="45.5" lengthAdjust="spacingAndGlyphs">Окуповані</text>
<g transform="translate(375.5,518.8)"><path d="M3.6,-17.5 L13.4,-17.5 L14.8,-7 L19,-7 L19,0 L0,0 Z" fill="#0a0a0a" stroke="#fff" stroke-width="1.2" stroke-linejoin="round" paint-order="stroke"/><path d="M6,-20.5 l1,-1.6 M10.5,-20 l1,-1.6" stroke="#0a0a0a" stroke-width="0.8" fill="none" opacity=".7"/><path d="M8.3,-15 L5.4,-2 M10.6,-12 L11.2,-4" stroke="#fff" stroke-width="0.6" opacity=".35" fill="none"/><path d="M14.6,-3.2 l2.8,-3.2 l2.6,2.4 l0.6,3.4 l-5,0.6 z" fill="#e30613" stroke="#e30613" stroke-width="1" stroke-linejoin="round"/></g>
<text x="400.5" y="518.8" font-size="7.4" font-family='"DejaVu Sans", "Liberation Sans", sans-serif' font-weight="normal" fill="#2e2e2e" text-anchor="start" textLength="72.5" lengthAdjust="spacingAndGlyphs">Бойові дії поряд</text>
<text x="375.5" y="546" font-size="6.6" font-family='"DejaVu Sans", "Liberation Sans", sans-serif' font-weight="normal" fill="#b4b4b4" text-anchor="start" textLength="150.5" lengthAdjust="spacingAndGlyphs">Джерело: Forbes, Київська школа економіки.</text>
<g transform="translate(556.5,277)"><path d="M3.6,-18.6 L13.9,-18.6 L14.6,-12 L16.6,-4 L0.8,-4 L2.8,-12 Z" fill="#f7c4c6"/><path d="M5.6,-18.4 L4.4,-5 M7.7,-18.4 L7.2,-5 M9.8,-18.4 L10.2,-5 M11.9,-18.4 L13,-5 M3.4,-15.4 H14.2 M3,-12.2 H14.6 M2.4,-9 H15.2" stroke="#ee979b" stroke-width="0.55" fill="none"/><path d="M0.2,0 L0.2,-2.6 L1.6,-4.2 L3.4,-4.8 L5,-3.9 L6.6,-5.4 L8.6,-4.2 L10.4,-5.6 L12.4,-4.2 L14.2,-5.4 L16,-4 L17.8,-4.8 L19.4,-3.2 L19.8,0 Z" fill="#e30613" stroke="#e30613" stroke-width="0.6" stroke-linejoin="round"/></g>
<text x="556.4" y="286.4" font-size="7.9" font-family='"DejaVu Sans", "Liberation Sans", sans-serif' font-weight="normal" fill="#262626" text-anchor="start" textLength="56.6" lengthAdjust="spacingAndGlyphs">Чернігівська</text>
<text x="556.4" y="295" font-size="7.9" font-family='"DejaVu Sans", "Liberation Sans", sans-serif' font-weight="normal" fill="#262626" text-anchor="start" textLength="18" lengthAdjust="spacingAndGlyphs">ТЕЦ</text>
<g transform="translate(620.2,276.6)"><path d="M3.6,-17.5 L13.4,-17.5 L14.8,-7 L19,-7 L19,0 L0,0 Z" fill="#0a0a0a" stroke="#fff" stroke-width="1.2" stroke-linejoin="round" paint-order="stroke"/><path d="M6,-20.5 l1,-1.6 M10.5,-20 l1,-1.6" stroke="#0a0a0a" stroke-width="0.8" fill="none" opacity=".7"/><path d="M8.3,-15 L5.4,-2 M10.6,-12 L11.2,-4" stroke="#fff" stroke-width="0.6" opacity=".35" fill="none"/></g>
<text x="641.6" y="269.6" font-size="7.9" font-family='"DejaVu Sans", "Liberation Sans", sans-serif' font-weight="normal" fill="#262626" text-anchor="start" textLength="36.4" lengthAdjust="spacingAndGlyphs">Сумська</text>
<text x="641.6" y="278" font-size="7.9" font-family='"DejaVu Sans", "Liberation Sans", sans-serif' font-weight="normal" fill="#262626" text-anchor="start" textLength="18" lengthAdjust="spacingAndGlyphs">ТЕЦ</text>
<g transform="translate(651.5,309)"><path d="M3.6,-18.6 L13.9,-18.6 L14.6,-12 L16.6,-4 L0.8,-4 L2.8,-12 Z" fill="#f7c4c6"/><path d="M5.6,-18.4 L4.4,-5 M7.7,-18.4 L7.2,-5 M9.8,-18.4 L10.2,-5 M11.9,-18.4 L13,-5 M3.4,-15.4 H14.2 M3,-12.2 H14.6 M2.4,-9 H15.2" stroke="#ee979b" stroke-width="0.55" fill="none"/><path d="M0.2,0 L0.2,-2.6 L1.6,-4.2 L3.4,-4.8 L5,-3.9 L6.6,-5.4 L8.6,-4.2 L10.4,-5.6 L12.4,-4.2 L14.2,-5.4 L16,-4 L17.8,-4.8 L19.4,-3.2 L19.8,0 Z" fill="#e30613" stroke="#e30613" stroke-width="0.6" stroke-linejoin="round"/></g>
<text x="649" y="301" font-size="7.9" font-family='"DejaVu Sans", "Liberation Sans", sans-serif' font-weight="normal" fill="#262626" text-anchor="end" textLength="46.6" lengthAdjust="spacingAndGlyphs">Охтирська</text>
<text x="649" y="309.2" font-size="7.9" font-family='"DejaVu Sans", "Liberation Sans", sans-serif' font-weight="normal" fill="#262626" text-anchor="end" textLength="18" lengthAdjust="spacingAndGlyphs">ТЕЦ</text>
<g transform="translate(687.4,343.4)"><path d="M3.6,-17.5 L13.4,-17.5 L14.8,-7 L19,-7 L19,0 L0,0 Z" fill="#0a0a0a" stroke="#fff" stroke-width="1.2" stroke-linejoin="round" paint-order="stroke"/><path d="M6,-20.5 l1,-1.6 M10.5,-20 l1,-1.6" stroke="#0a0a0a" stroke-width="0.8" fill="none" opacity=".7"/><path d="M8.3,-15 L5.4,-2 M10.6,-12 L11.2,-4" stroke="#fff" stroke-width="0.6" opacity=".35" fill="none"/></g>
<text x="684" y="336" font-size="7.9" font-family='"DejaVu Sans", "Liberation Sans", sans-serif' font-weight="normal" fill="#262626" text-anchor="end" textLength="48" lengthAdjust="spacingAndGlyphs">Харківська</text>
<text x="684" y="344.4" font-size="7.9" font-family='"DejaVu Sans", "Liberation Sans", sans-serif' font-weight="normal" fill="#262626" text-anchor="end" textLength="25" lengthAdjust="spacingAndGlyphs">ТЕЦ-5</text>
<g transform="translate(709.2,333.4)"><path d="M3.6,-17.5 L13.4,-17.5 L14.8,-7 L19,-7 L19,0 L0,0 Z" fill="#0a0a0a" stroke="#fff" stroke-width="1.2" stroke-linejoin="round" paint-order="stroke"/><path d="M6,-20.5 l1,-1.6 M10.5,-20 l1,-1.6" stroke="#0a0a0a" stroke-width="0.8" fill="none" opacity=".7"/><path d="M8.3,-15 L5.4,-2 M10.6,-12 L11.2,-4" stroke="#fff" stroke-width="0.6" opacity=".35" fill="none"/></g>
<text x="731.4" y="326" font-size="7.9" font-family='"DejaVu Sans", "Liberation Sans", sans-serif' font-weight="normal" fill="#262626" text-anchor="start" textLength="24.6" lengthAdjust="spacingAndGlyphs">Есхар</text>
<text x="731.4" y="334.2" font-size="7.9" font-family='"DejaVu Sans", "Liberation Sans", sans-serif' font-weight="normal" fill="#262626" text-anchor="start" textLength="25" lengthAdjust="spacingAndGlyphs">ТЕЦ-2</text>
<g transform="translate(710.4,361)"><path d="M3.6,-17.5 L13.4,-17.5 L14.8,-7 L19,-7 L19,0 L0,0 Z" fill="#0a0a0a" stroke="#fff" stroke-width="1.2" stroke-linejoin="round" paint-order="stroke"/><path d="M6,-20.5 l1,-1.6 M10.5,-20 l1,-1.6" stroke="#0a0a0a" stroke-width="0.8" fill="none" opacity=".7"/><path d="M8.3,-15 L5.4,-2 M10.6,-12 L11.2,-4" stroke="#fff" stroke-width="0.6" opacity=".35" fill="none"/></g>
<text x="720.5" y="371.4" font-size="7.9" font-family='"DejaVu Sans", "Liberation Sans", sans-serif' font-weight="normal" fill="#262626" text-anchor="middle" textLength="41" lengthAdjust="spacingAndGlyphs">Зміївська</text>
<text x="720.5" y="379.4" font-size="7.9" font-family='"DejaVu Sans", "Liberation Sans", sans-serif' font-weight="normal" fill="#262626" text-anchor="middle" textLength="16.5" lengthAdjust="spacingAndGlyphs">ТЕС</text>
<g transform="translate(782.4,367)"><path d="M3.6,-17.5 L13.4,-17.5 L14.8,-7 L19,-7 L19,0 L0,0 Z" fill="#6a6a6a" stroke="#fff" stroke-width="1.2" stroke-linejoin="round" paint-order="stroke"/><path d="M6,-20.5 l1,-1.6 M10.5,-20 l1,-1.6" stroke="#6a6a6a" stroke-width="0.8" fill="none" opacity=".7"/><path d="M8.3,-15 L5.4,-2 M10.6,-12 L11.2,-4" stroke="#fff" stroke-width="0.6" opacity=".35" fill="none"/></g>
<text x="791.5" y="377" font-size="7.9" font-family='"DejaVu Sans", "Liberation Sans", sans-serif' font-weight="normal" fill="#262626" text-anchor="middle" textLength="45" lengthAdjust="spacingAndGlyphs">Луганська</text>
<text x="791.5" y="385.2" font-size="7.9" font-family='"DejaVu Sans", "Liberation Sans", sans-serif' font-weight="normal" fill="#262626" text-anchor="middle" textLength="16.5" lengthAdjust="spacingAndGlyphs">ТЕС</text>
<g transform="translate(621,369.6)"><path d="M3.6,-18.6 L13.9,-18.6 L14.6,-12 L16.6,-4 L0.8,-4 L2.8,-12 Z" fill="#f7c4c6"/><path d="M5.6,-18.4 L4.4,-5 M7.7,-18.4 L7.2,-5 M9.8,-18.4 L10.2,-5 M11.9,-18.4 L13,-5 M3.4,-15.4 H14.2 M3,-12.2 H14.6 M2.4,-9 H15.2" stroke="#ee979b" stroke-width="0.55" fill="none"/><path d="M0.2,0 L0.2,-2.6 L1.6,-4.2 L3.4,-4.8 L5,-3.9 L6.6,-5.4 L8.6,-4.2 L10.4,-5.6 L12.4,-4.2 L14.2,-5.4 L16,-4 L17.8,-4.8 L19.4,-3.2 L19.8,0 Z" fill="#e30613" stroke="#e30613" stroke-width="0.6" stroke-linejoin="round"/></g>
<text x="618.4" y="361" font-size="7.9" font-family='"DejaVu Sans", "Liberation Sans", sans-serif' font-weight="normal" fill="#262626" text-anchor="end" textLength="64.8" lengthAdjust="spacingAndGlyphs">Кременчуцька</text>
<text x="618.4" y="369.4" font-size="7.9" font-family='"DejaVu Sans", "Liberation Sans", sans-serif' font-weight="normal" fill="#262626" text-anchor="end" textLength="18" lengthAdjust="spacingAndGlyphs">ТЕЦ</text>
<g transform="translate(729,401)"><path d="M3.6,-17.5 L13.4,-17.5 L14.8,-7 L19,-7 L19,0 L0,0 Z" fill="#0a0a0a" stroke="#fff" stroke-width="1.2" stroke-linejoin="round" paint-order="stroke"/><path d="M6,-20.5 l1,-1.6 M10.5,-20 l1,-1.6" stroke="#0a0a0a" stroke-width="0.8" fill="none" opacity=".7"/><path d="M8.3,-15 L5.4,-2 M10.6,-12 L11.2,-4" stroke="#fff" stroke-width="0.6" opacity=".35" fill="none"/><path d="M14.6,-3.2 l2.8,-3.2 l2.6,2.4 l0.6,3.4 l-5,0.6 z" fill="#e30613" stroke="#e30613" stroke-width="1" stroke-linejoin="round"/></g>
<text x="725" y="393" font-size="7.9" font-family='"DejaVu Sans", "Liberation Sans", sans-serif' font-weight="normal" fill="#262626" text-anchor="end" textLength="56.6" lengthAdjust="spacingAndGlyphs">Вуглегірська</text>
<text x="725" y="401.2" font-size="7.9" font-family='"DejaVu Sans", "Liberation Sans", sans-serif' font-weight="normal" fill="#262626" text-anchor="end" textLength="16.5" lengthAdjust="spacingAndGlyphs">ТЕС</text>
<g transform="translate(751.4,419.4)"><path d="M3.6,-17.5 L13.4,-17.5 L14.8,-7 L19,-7 L19,0 L0,0 Z" fill="#0a0a0a" stroke="#fff" stroke-width="1.2" stroke-linejoin="round" paint-order="stroke"/><path d="M6,-20.5 l1,-1.6 M10.5,-20 l1,-1.6" stroke="#0a0a0a" stroke-width="0.8" fill="none" opacity=".7"/><path d="M8.3,-15 L5.4,-2 M10.6,-12 L11.2,-4" stroke="#fff" stroke-width="0.6" opacity=".35" fill="none"/></g>
<text x="727.6" y="428" font-size="7.9" font-family='"DejaVu Sans", "Liberation Sans", sans-serif' font-weight="normal" fill="#262626" text-anchor="start" textLength="68.5" lengthAdjust="spacingAndGlyphs">Авдіївська ТЕЦ</text>
<g transform="translate(618.4,426)"><path d="M3.6,-17.5 L13.4,-17.5 L14.8,-7 L19,-7 L19,0 L0,0 Z" fill="#0a0a0a" stroke="#fff" stroke-width="1.2" stroke-linejoin="round" paint-order="stroke"/><path d="M6,-20.5 l1,-1.6 M10.5,-20 l1,-1.6" stroke="#0a0a0a" stroke-width="0.8" fill="none" opacity=".7"/><path d="M8.3,-15 L5.4,-2 M10.6,-12 L11.2,-4" stroke="#fff" stroke-width="0.6" opacity=".35" fill="none"/></g>
<text x="615.4" y="418" font-size="7.9" font-family='"DejaVu Sans", "Liberation Sans", sans-serif' font-weight="normal" fill="#262626" text-anchor="end" textLength="55" lengthAdjust="spacingAndGlyphs">Криворізька</text>
<text x="615.4" y="426.4" font-size="7.9" font-family='"DejaVu Sans", "Liberation Sans", sans-serif' font-weight="normal" fill="#262626" text-anchor="end" textLength="16.5" lengthAdjust="spacingAndGlyphs">ТЕС</text>
<g transform="translate(679.4,432)"><path d="M3.6,-17.5 L13.4,-17.5 L14.8,-7 L19,-7 L19,0 L0,0 Z" fill="#6a6a6a" stroke="#fff" stroke-width="1.2" stroke-linejoin="round" paint-order="stroke"/><path d="M6,-20.5 l1,-1.6 M10.5,-20 l1,-1.6" stroke="#6a6a6a" stroke-width="0.8" fill="none" opacity=".7"/><path d="M8.3,-15 L5.4,-2 M10.6,-12 L11.2,-4" stroke="#fff" stroke-width="0.6" opacity=".35" fill="none"/></g>
<text x="689" y="441" font-size="7.9" font-family='"DejaVu Sans", "Liberation Sans", sans-serif' font-weight="normal" fill="#262626" text-anchor="start" textLength="48.6" lengthAdjust="spacingAndGlyphs">Запорізька</text>
<text x="689" y="449.2" font-size="7.9" font-family='"DejaVu Sans", "Liberation Sans", sans-serif' font-weight="normal" fill="#262626" text-anchor="start" textLength="16.5" lengthAdjust="spacingAndGlyphs">ТЕС</text>
<g transform="translate(663,447.8)"><path d="M4.3,-22 L11.6,-22 L12.4,-14 L14,0 L0,0 L2.8,-12 Z" fill="#6a6a6a" stroke="#e9e9e9" stroke-width="0.8" paint-order="stroke"/><path d="M16,-16 L20.4,-16 L21,-10 L22.4,0 L14.2,0 L15.4,-9 Z" fill="#6a6a6a" stroke="#e9e9e9" stroke-width="0.8" paint-order="stroke"/><circle cx="7.4" cy="-7" r="2.6" fill="#8a8a8a"/><path d="M7,-25 l1,-1.8" stroke="#6a6a6a" stroke-width="0.8" opacity=".7"/></g>
<text x="686" y="457.4" font-size="7.9" font-family='"DejaVu Sans", "Liberation Sans", sans-serif' font-weight="normal" fill="#262626" text-anchor="end" textLength="49" lengthAdjust="spacingAndGlyphs">Запорізька</text>
<text x="686" y="465.6" font-size="7.9" font-family='"DejaVu Sans", "Liberation Sans", sans-serif' font-weight="normal" fill="#262626" text-anchor="end" textLength="18" lengthAdjust="spacingAndGlyphs">АЕС</text>
<g transform="translate(581.6,460.4)"><path d="M3.6,-17.5 L13.4,-17.5 L14.8,-7 L19,-7 L19,0 L0,0 Z" fill="#0a0a0a" stroke="#fff" stroke-width="1.2" stroke-linejoin="round" paint-order="stroke"/><path d="M6,-20.5 l1,-1.6 M10.5,-20 l1,-1.6" stroke="#0a0a0a" stroke-width="0.8" fill="none" opacity=".7"/><path d="M8.3,-15 L5.4,-2 M10.6,-12 L11.2,-4" stroke="#fff" stroke-width="0.6" opacity=".35" fill="none"/></g>
<text x="578.4" y="452.4" font-size="7.9" font-family='"DejaVu Sans", "Liberation Sans", sans-serif' font-weight="normal" fill="#262626" text-anchor="end" textLength="60.8" lengthAdjust="spacingAndGlyphs">Миколаївська</text>
<text x="578.4" y="461" font-size="7.9" font-family='"DejaVu Sans", "Liberation Sans", sans-serif' font-weight="normal" fill="#262626" text-anchor="end" textLength="18" lengthAdjust="spacingAndGlyphs">ТЕЦ</text>
</svg></div>
<div id="taskbar" class="abs"><div class="abs" style="left:123px;top:1px;width:40px;height:31px;background:rgba(255,255,255,.22)"></div>
<div class="abs" style="left:413.5px;top:1px;width:40.5px;height:31px;background:rgba(255,255,255,.20)"></div>
<div class="abs" style="left:456px;top:1px;width:39.5px;height:31px;background:rgba(225,232,255,.42)"></div>
<svg class="abs" style="left:0;top:0" width="900" height="32" viewBox="0 565 900 32">
<defs><filter id="tbb"><feGaussianBlur stdDeviation="0.45"/></filter></defs>
<g filter="url(#tbb)">
<!-- cortana -->
<circle cx="18.6" cy="581.7" r="5.6" fill="none" stroke="#fff" stroke-width="2"/>
<!-- task view -->
<g fill="none" stroke="#9ad6ee" stroke-width="1.4"><rect x="54" y="577.5" width="8" height="8.5"/><path d="M51.5,576 v12 M64.5,576 v3.5 M64.5,582 v6 M53,576.5 l2,1.5 M53,587.5 l2,-1.5 M63,576.5 l-2,1.5 M63,587.5 l-2,-1.5"/></g>
<!-- store -->
<rect x="91.5" y="573.5" width="19" height="18" rx="2.5" fill="#f7f7f7"/>
<path d="M96,573.5 v-1.5 h10 v1.5" stroke="#49b4e6" stroke-width="1.2" fill="none"/>
<rect x="96.6" y="578.2" width="3.8" height="3.8" fill="#f25022"/><rect x="101.2" y="578.2" width="3.8" height="3.8" fill="#7fba00"/>
<rect x="96.6" y="582.8" width="3.8" height="3.8" fill="#00a4ef"/><rect x="101.2" y="582.8" width="3.8" height="3.8" fill="#ffb900"/>
<!-- word -->
<rect x="142" y="574.5" width="10" height="13.5" rx="1" fill="#eef2fa"/>
<path d="M147,577 h4 M147,579.5 h4 M147,582 h4 M147,584.5 h4" stroke="#2b579a" stroke-width="1"/>
<path d="M133.5,575 L146,573 V590 L133.5,588 Z" fill="#2b4f9a"/>
<text x="135.2" y="585.3" font-size="9.5" font-weight="bold" font-family='"Liberation Sans", sans-serif' fill="#fff" textLength="8.5" lengthAdjust="spacingAndGlyphs">W</text>
<!-- mail -->
<path d="M175,579 L185,572 L195,579 V589 a1,1 0 0 1 -1,1 H176 a1,1 0 0 1 -1,-1 Z" fill="#1b74d0"/>
<path d="M177,578 H193 V586 H177 Z" fill="#fff"/>
<path d="M175,579.5 L185,586 L195,579.5 V589 a1,1 0 0 1 -1,1 H176 a1,1 0 0 1 -1,-1 Z" fill="#39b6f0"/>
<path d="M175,590 L185,583.5 L195,590 Z" fill="#1f8de6"/>
<!-- explorer -->
<path d="M217,574.5 h6.5 l1.5,1.5 h10.5 v12 h-18.5 Z" fill="#f5b83a"/>
<rect x="217" y="577.5" width="18.5" height="10.5" fill="#fbd75b"/>
<path d="M220.5,588 v-5 h11.500 v5 h-2.500 v-2.500 h-6.500 v2.500 z" fill="#2c86d8"/>
<!-- powerpoint -->
<rect x="268" y="575" width="9.5" height="13" rx="1" fill="#f4d9d0"/>
<path d="M272,578 h4.500 M272,581.500 h4.500 M272,585 h4.500" stroke="#d24726" stroke-width="1"/>
<path d="M259,575 L271.500,573 V590 L259,588 Z" fill="#d5421f"/>
<text x="262" y="585.3" font-size="9.5" font-weight="bold" font-family='"Liberation Sans", sans-serif' fill="#fff">P</text>
<!-- edge -->
<ellipse cx="309" cy="581.5" rx="10.4" ry="9.6" fill="#1c8fd6"/>
<path d="M298.8,583 a10.2,9.4 0 0 1 20.2,-3.600 c0.600,3.600 -2.400,5.400 -6,5.400 h-4.800 c0,3 3.600,5.400 8.400,3.600 a10.200,9.400 0 0 1 -17.800,-5.400 z" fill="#3fd28a" opacity=".9"/>
<path d="M311,572.200 a10,9.400 0 0 1 8,8 c0.400,3 -1.600,4.800 -4.600,4.800 c1.600,-4 -0.400,-9.800 -3.400,-12.800 z" fill="#7fe05a" opacity=".85"/>
<path d="M300.400,585.500 a8.600,8.200 0 0 0 13.200,4.800 c-4.800,1.200 -9.600,-1.200 -9.600,-6 c0,-3.600 3.600,-6 7.200,-4.800 c-3.600,-3.600 -10.800,-1.200 -10.800,6 z" fill="#0c59a4"/>
<!-- zoom -->
<circle cx="350.700" cy="581.300" r="10" fill="#0b5cff"/>
<text x="350.700" y="583.300" font-size="5.600" font-weight="bold" font-family='"Liberation Sans", sans-serif' fill="#fff" text-anchor="middle">zoom</text>
<!-- viber -->
<path d="M392.300,572.200 c6.800,0 9.400,2.800 9.400,8.800 c0,6 -3.200,8.800 -8.200,8.800 l-3.400,2.800 v-3.400 c-4.400,-1 -6.600,-3.400 -6.600,-8.200 c0,-6 2.800,-8.800 8.800,-8.800 z" fill="#7d51e0" stroke="#fff" stroke-width="1.700"/>
<path d="M388.500,576.500 c-0.600,3.400 2.800,8 6.800,8.500 l1.400,-1.700 l-2.300,-1.700 l-1.100,0.800 c-1.100,-0.600 -2.300,-1.900 -2.600,-3.100 l0.900,-0.900 l-1.400,-2.500 z" fill="#fff"/>
<!-- opera -->
<ellipse cx="433.700" cy="581.800" rx="9.700" ry="10.200" fill="#ee1226"/>
<ellipse cx="433.700" cy="581.800" rx="4" ry="7.300" fill="#5b9fd0"/>
<!-- zoom 2 -->
<circle cx="475" cy="581.300" r="10.200" fill="#0b5cff"/>
<text x="475" y="583.300" font-size="5.600" font-weight="bold" font-family='"Liberation Sans", sans-serif' fill="#fff" text-anchor="middle">zoom</text>
<!-- chrome -->
<circle cx="516.700" cy="581.500" r="10" fill="#fbc116"/>
<path d="M516.700,581.500 L508.040,576.500 A10,10 0 0 1 525.360,576.500 Z" fill="#e33b2e"/>
<path d="M508.040,576.500 A10,10 0 0 1 525.360,576.500 L516.700,576.500 Z" fill="#e33b2e"/>
<path d="M516.700,581.500 L508.040,576.500 A10,10 0 0 0 516.700,591.500 Z" fill="#2da94f"/>
<path d="M516.700,591.500 A10,10 0 0 1 508.040,576.500 L512.400,584 Z" fill="#2da94f"/>
<circle cx="516.700" cy="581.500" r="4.700" fill="#fff"/>
<circle cx="516.700" cy="581.500" r="3.700" fill="#3b7ded"/>
<!-- tray -->
<path d="M764.500,582 l2.500,-3 l2.500,3 z" fill="#fff"/>
<rect x="784.500" y="574" width="5.500" height="9" rx="1" fill="#f4f4f4"/><path d="M787.200,583 v4" stroke="#f4f4f4" stroke-width="1.600"/>
<path d="M802,587.500 a8,8 0 0 1 8,-8 M804.500,587.500 a5.500,5.500 0 0 1 5.500,-5.500 M807,587.500 a3,3 0 0 1 3,-3 M810,578.500 v9" stroke="#a9c4de" stroke-width="1" fill="none"/>
<rect x="820.500" y="576" width="18.500" height="11" rx="1.500" fill="none" stroke="#e8eef5" stroke-width="1.100"/>
<path d="M823,579.500 h13.500 M824.500,583.500 h10.500" stroke="#c6d6e8" stroke-width="0.900" stroke-dasharray="1.500 1"/>
<text x="848" y="585" font-size="9" font-family='"Liberation Sans", sans-serif' fill="#fff" textLength="19.500" lengthAdjust="spacingAndGlyphs">ENG</text>
<text x="890.500" y="578.500" font-size="10" font-family='"Liberation Sans", sans-serif' fill="#fff">07:53</text>
<text x="878.500" y="592.500" font-size="10" font-family='"Liberation Sans", sans-serif' fill="#fff">03.11.2022</text>
</g>
</svg>
</div><div id="under" class="abs"></div>
</div></div></body></html>
